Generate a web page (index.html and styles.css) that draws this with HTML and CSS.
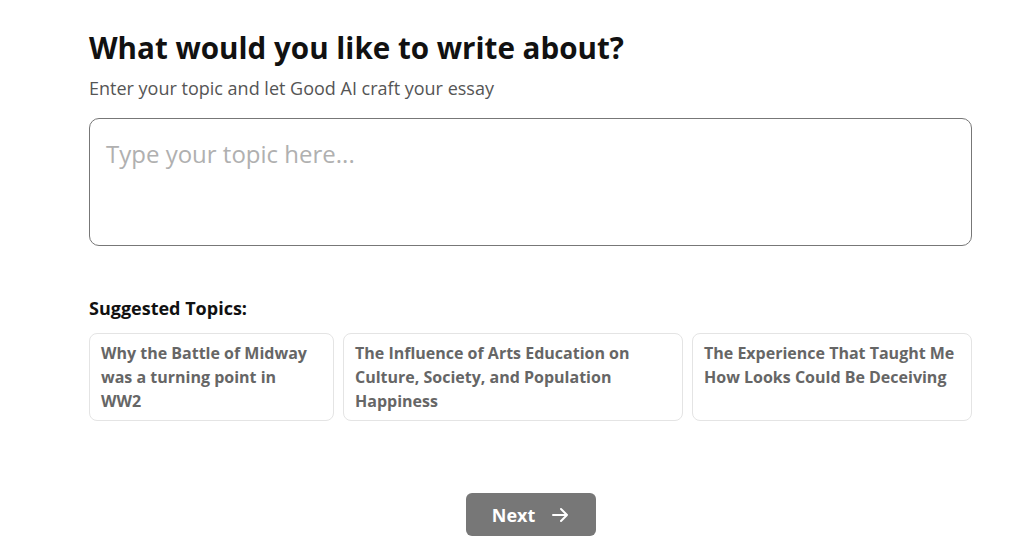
FILE: index.html
```html
<!DOCTYPE html>
<html lang="en">
<head>
<meta charset="utf-8">
<title>Write about</title>
<link rel="stylesheet" href="styles.css">
</head>
<body>
<main class="page">
  <h1 class="title">What would you like to write about?</h1>
  <p class="subtitle">Enter your topic and let Good AI craft your essay</p>
  <textarea class="topic-input" placeholder="Type your topic here..."></textarea>
  <h2 class="suggest-label">Suggested Topics:</h2>
  <div class="cards">
    <div class="card">Why the Battle of Midway was a turning point in WW2</div>
    <div class="card">The Influence of Arts Education on Culture, Society, and Population Happiness</div>
    <div class="card">The Experience That Taught Me How Looks Could Be Deceiving</div>
  </div>
  <div class="actions">
    <button class="next-btn">Next
      <svg class="arrow" width="18" height="18" viewBox="0 0 18 18" fill="none" stroke="currentColor" stroke-width="2" stroke-linecap="round" stroke-linejoin="round"><path d="M2 9h14M10 3l6 6-6 6"/></svg>
    </button>
  </div>
</main>
</body>
</html>
```
FILE: styles.css
```css
* { box-sizing: border-box; }
html, body { margin: 0; padding: 0; background: #fff; }
body { font-family: "Open Sans", "Noto Sans", "Liberation Sans", sans-serif; color: #111; }
.page {
  width: 883px;
  margin: 0 0 0 89px;
  padding-top: 25px;
  display: flex;
  flex-direction: column;
}
.title {
  margin: 0;
  font-size: 29.6px;
  font-weight: 700;
  line-height: 46px;
  color: #111;
}
.subtitle {
  margin: 4px 0 0;
  font-size: 18px;
  line-height: 26px;
  color: #555;
}
.topic-input {
  margin-top: 17px;
  width: 100%;
  height: 128px;
  border: 1.5px solid #777;
  border-radius: 10px;
  padding: 18px 16px;
  font-family: inherit;
  font-size: 24px;
  resize: none;
  outline: none;
  display: block;
}
.topic-input::placeholder { color: #b0b0b0; }
.suggest-label {
  margin: 49px 0 0;
  font-size: 18px;
  font-weight: 700;
  line-height: 26px;
  color: #111;
}
.cards {
  margin-top: 12px;
  display: grid;
  grid-template-columns: 245fr 340fr 280fr;
  gap: 9px;
}
.card {
  border: 1px solid #e4e4e4;
  border-radius: 8px;
  padding: 7px 14px 7px 11px;
  font-size: 16px;
  font-weight: 700;
  line-height: 24px;
  color: #666;
  min-height: 88px;
}
.actions {
  margin-top: 72px;
  display: flex;
  justify-content: center;
}
.next-btn {
  width: 130px;
  height: 43px;
  background: #777;
  border: none;
  border-radius: 6px;
  color: #fff;
  font-family: inherit;
  font-size: 18px;
  font-weight: 700;
  display: flex;
  align-items: center;
  justify-content: center;
  gap: 16px;
  cursor: pointer;
}
.arrow { display: block; }
```
